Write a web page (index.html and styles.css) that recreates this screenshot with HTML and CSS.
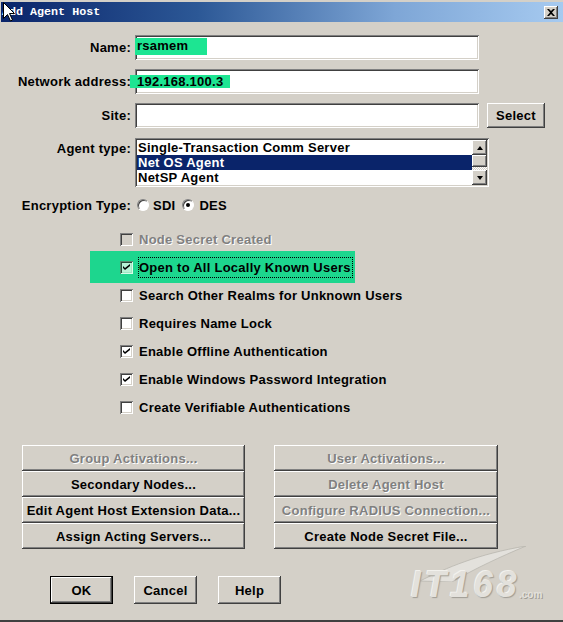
FILE: index.html
```html
<!DOCTYPE html>
<html lang="en">
<head>
<meta charset="utf-8">
<title>Add Agent Host</title>
<link rel="stylesheet" href="styles.css">
</head>
<body>
<div class="window">
  <div class="titlebar">
    <span class="title">Add Agent Host</span>
    <span class="close raised">
      <svg width="8" height="7" viewBox="0 0 8 7"><path d="M0 0h2l2 2 2-2h2L5 3.5 8 7H6L4 5 2 7H0l3-3.5z" fill="#000"/></svg>
    </span>
  </div>

  <div class="content">
    <div class="form">
      <div class="lbl">Name:</div>
      <div class="field sunken"><span class="mark mark-name">rsamem</span></div>
      <div></div>

      <div class="lbl">Network address:</div>
      <div class="field sunken"><span class="mark mark-addr">192.168.100.3</span></div>
      <div></div>

      <div class="lbl">Site:</div>
      <div class="field sunken"></div>
      <div class="btn raised select-btn">Select</div>

      <div class="lbl lbl-top">Agent type:</div>
      <div class="list sunken">
        <div class="items">
          <div class="item">Single-Transaction Comm Server</div>
          <div class="item sel">Net OS Agent</div>
          <div class="item">NetSP Agent</div>
        </div>
        <div class="scrollbar">
          <div class="sb-btn raised"><span class="arrow up"></span></div>
          <div class="sb-track"><div class="sb-thumb raised"></div></div>
          <div class="sb-btn raised"><span class="arrow down"></span></div>
        </div>
      </div>

      <div class="lbl">Encryption Type:</div>
      <div class="radios">
        <span class="radio"></span><span class="rtext">SDI</span>
        <span class="radio on"></span><span class="rtext">DES</span>
      </div>
    </div>

    <div class="checks">
      <div class="chk disabled"><span class="box"></span><span>Node Secret Created</span></div>
      <div class="chk hl"><span class="box checked"><svg width="7" height="7" viewBox="0 0 7 7"><path d="M0 2l2 2 5-4v2L2 6 0 4z" fill="#000"/></svg></span><span class="focus">Open to All Locally Known Users</span></div>
      <div class="chk"><span class="box"></span><span>Search Other Realms for Unknown Users</span></div>
      <div class="chk"><span class="box"></span><span>Requires Name Lock</span></div>
      <div class="chk"><span class="box checked"><svg width="7" height="7" viewBox="0 0 7 7"><path d="M0 2l2 2 5-4v2L2 6 0 4z" fill="#000"/></svg></span><span>Enable Offline Authentication</span></div>
      <div class="chk"><span class="box checked"><svg width="7" height="7" viewBox="0 0 7 7"><path d="M0 2l2 2 5-4v2L2 6 0 4z" fill="#000"/></svg></span><span>Enable Windows Password Integration</span></div>
      <div class="chk"><span class="box"></span><span>Create Verifiable Authentications</span></div>
    </div>

    <div class="actions">
      <div class="btn raised disabled">Group Activations...</div>
      <div class="btn raised disabled">User Activations...</div>
      <div class="btn raised">Secondary Nodes...</div>
      <div class="btn raised disabled">Delete Agent Host</div>
      <div class="btn raised">Edit Agent Host Extension Data...</div>
      <div class="btn raised disabled">Configure RADIUS Connection...</div>
      <div class="btn raised">Assign Acting Servers...</div>
      <div class="btn raised">Create Node Secret File...</div>
    </div>

    <div class="footer">
      <div class="btn default">OK</div>
      <div class="btn raised">Cancel</div>
      <div class="btn raised">Help</div>
    </div>
  </div>

  <!-- faint site watermark in the lower right corner -->
  <div class="watermark">
    <svg class="swoosh" width="110" height="36" viewBox="0 0 110 36"><path d="M2 35 C28 22 60 8 108 0 C82 11 58 22 34 36 Z" fill="#e3e1dc" stroke="#b9b6af" stroke-width="0.8"/></svg>
    <span class="wm-text">IT168</span><span class="wm-com">.com</span>
  </div>

  <!-- mouse pointer resting on the caption -->
  <svg class="cursor" width="12" height="20" viewBox="0 0 12 20"><path d="M0.5 0.5V16.5L4.5 12.5L7.5 19L9.5 18L6.5 11.5H11.5Z" fill="#fff" stroke="#000" stroke-width="1"/></svg>
</div>
</body>
</html>
```

FILE: styles.css
```css
* {
  box-sizing: border-box;
}

body {
  margin: 0;
  background: #d4d0c8;
  font-family: "Liberation Sans", Arial, sans-serif;
  font-size: 13px;
  font-weight: bold;
  letter-spacing: 0.25px;
  color: #000;
}

.window {
  position: relative;
  width: 563px;
  height: 622px;
  background: #d4d0c8;
  padding-top: 2px;
  border-bottom: 2px solid #404040;
  overflow: hidden;
}

/* caption */
.titlebar {
  height: 20px;
  margin-left: 1px;
  background: linear-gradient(to right, #0a246a 0%, #2c5896 35%, #7ea6d6 70%, #a6caf0 100%);
  display: flex;
  align-items: center;
  justify-content: space-between;
  padding: 0 5px 0 1px;
}

.title {
  color: #fff;
  font-family: "Liberation Mono", "DejaVu Sans Mono", monospace;
  font-size: 11.7px;
  letter-spacing: 0;
}

.close {
  width: 14px;
  height: 13px;
  background: #d4d0c8;
  display: flex;
  align-items: center;
  justify-content: center;
}

/* 3D bevels */
.raised {
  background: #d4d0c8;
  box-shadow: inset -1px -1px #404040, inset 1px 1px #fff, inset -2px -2px #808080, inset 2px 2px #d4d0c8;
}

.sunken {
  box-shadow: inset 1px 1px #808080, inset -1px -1px #fff, inset 2px 2px #404040, inset -2px -2px #d4d0c8;
}

.content {
  padding-top: 13px;
}

/* top form */
.form {
  display: grid;
  grid-template-columns: 131px 344px 62px;
  column-gap: 4px;
  row-gap: 9px;
}

.lbl {
  text-align: right;
  align-self: center;
  white-space: nowrap;
}

.lbl-top {
  align-self: start;
  padding-top: 4px;
}

.field {
  height: 25px;
  background: #fff;
  display: flex;
  align-items: center;
}

.mark {
  background: #1de592;
  white-space: nowrap;
}

.mark-name {
  width: 72px;
  height: 17px;
  line-height: 15px;
  padding-left: 2px;
  margin-top: -2px;
}

.mark-addr {
  margin-left: -5px;
  width: 100px;
  height: 13px;
  line-height: 13px;
  padding-left: 7px;
}

.select-btn {
  margin-left: 4px;
  height: 25px;
}

.btn {
  display: flex;
  align-items: center;
  justify-content: center;
  white-space: nowrap;
}

.btn.disabled,
.chk.disabled {
  color: #808080;
  text-shadow: 1px 1px 0 #fff;
}

/* agent type list */
.list {
  grid-column: 2 / 4;
  justify-self: start;
  width: 354px;
  height: 49px;
  margin-top: 1px;
  background: #fff;
  display: flex;
  padding: 2px;
}

.items {
  flex: 1;
}

.item {
  height: 15px;
  line-height: 15px;
  padding-left: 1px;
  white-space: nowrap;
}

.item.sel {
  background: #0a246a;
  color: #fff;
}

.scrollbar {
  width: 15px;
  display: flex;
  flex-direction: column;
}

.sb-btn {
  height: 15px;
  display: flex;
  align-items: center;
  justify-content: center;
}

.sb-track {
  flex: 1;
  background-color: #eeece8;
  background-image: repeating-conic-gradient(#d4d0c8 0 25%, #fff 0 50%);
  background-size: 2px 2px;
  display: flex;
  flex-direction: column;
}

.sb-thumb {
  height: 12px;
}

.arrow {
  width: 0;
  height: 0;
  border-left: 3.5px solid transparent;
  border-right: 3.5px solid transparent;
}

.arrow.up {
  border-bottom: 4px solid #000;
}

.arrow.down {
  border-top: 4px solid #000;
}

/* encryption radios */
.radios {
  grid-column: 2 / 4;
  display: flex;
  align-items: center;
  height: 18px;
  padding-left: 2px;
}

.radio {
  width: 12px;
  height: 12px;
  border-radius: 50%;
  background: #fff;
  border: 1px solid;
  border-color: #808080 #fff #fff #808080;
  box-shadow: inset 1px 1px 0 #404040;
  display: flex;
  align-items: center;
  justify-content: center;
}

.radio.on::after {
  content: "";
  width: 4px;
  height: 4px;
  border-radius: 50%;
  background: #000;
}

.rtext {
  margin-left: 4px;
  margin-right: 7px;
}

.rtext:last-child {
  margin-left: 5px;
}

/* check boxes */
.checks {
  margin-top: 11px;
  padding-left: 120px;
}

.chk {
  height: 28px;
  display: flex;
  align-items: center;
  gap: 6px;
  white-space: nowrap;
}

.chk.hl {
  width: 265px;
  height: 32px;
  margin: -2px 0 -2px -30px;
  padding-left: 30px;
  background: #1dd68e;
}

.box {
  width: 13px;
  height: 13px;
  flex: none;
  background: #fff;
  box-shadow: inset 1px 1px #808080, inset -1px -1px #fff, inset 2px 2px #404040, inset -2px -2px #d4d0c8;
  display: flex;
  align-items: center;
  justify-content: center;
}

.chk.disabled .box {
  background: #d4d0c8;
}

.chk.hl .box {
  background: #b8f2d6;
  box-shadow: inset 1px 1px #5a8a70, inset -1px -1px #d9fbe9, inset 2px 2px #2c4c3c, inset -2px -2px #9fe6c2;
}

.focus {
  outline: 1px dotted #000;
  outline-offset: 0;
  padding: 2px 1px 2px 0;
}

/* action buttons */
.actions {
  margin: 24px 0 0 22px;
  display: grid;
  grid-template-columns: 223px 224px;
  grid-auto-rows: 26px;
  column-gap: 29px;
}

.footer {
  margin: 27px 0 0 50px;
  display: flex;
  gap: 21px;
}

.footer .btn {
  width: 63px;
  height: 28px;
}

.btn.default {
  background: #d4d0c8;
  box-shadow: inset 0 0 0 1px #000, inset -2px -2px #404040, inset 2px 2px #fff, inset -3px -3px #808080;
}

/* watermark */
.watermark {
  position: absolute;
  left: 408px;
  top: 544px;
  width: 150px;
  height: 60px;
  pointer-events: none;
}

.swoosh {
  position: absolute;
  left: 10px;
  top: 2px;
}

.wm-text {
  position: absolute;
  left: 3px;
  top: 23px;
  font-size: 35px;
  font-style: italic;
  font-weight: bold;
  letter-spacing: 4px;
  line-height: 34px;
  color: #e3e1dc;
  text-shadow: 1px 1px 1px #9f9c95, -1px -1px 0 #f2f1ed;
  transform: scaleY(1.05);
}

.wm-com {
  position: absolute;
  left: 111px;
  top: 45px;
  font-size: 10px;
  font-weight: bold;
  letter-spacing: 0;
  color: #e3e1dc;
  text-shadow: 1px 1px 0 #9f9c95;
}

.cursor {
  position: absolute;
  left: 3px;
  top: 2px;
}
```
